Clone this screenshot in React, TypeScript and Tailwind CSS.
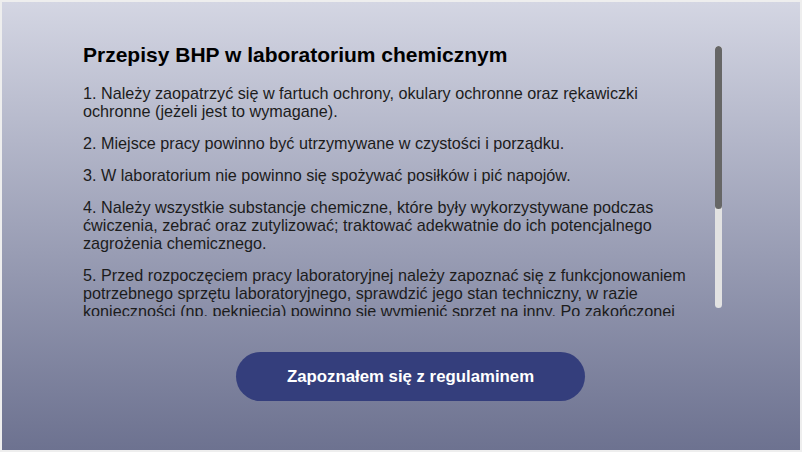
const rules = [
  '1. Należy zaopatrzyć się w fartuch ochrony, okulary ochronne oraz rękawiczki ochronne (jeżeli jest to wymagane).',
  '2. Miejsce pracy powinno być utrzymywane w czystości i porządku.',
  '3. W laboratorium nie powinno się spożywać posiłków i pić napojów.',
  '4. Należy wszystkie substancje chemiczne, które były wykorzystywane podczas ćwiczenia, zebrać oraz zutylizować; traktować adekwatnie do ich potencjalnego zagrożenia chemicznego.',
  '5. Przed rozpoczęciem pracy laboratoryjnej należy zapoznać się z funkcjonowaniem potrzebnego sprzętu laboratoryjnego, sprawdzić jego stan techniczny, w razie konieczności (np. pęknięcia) powinno się wymienić sprzęt na inny. Po zakończonej pracy sprzęt należy umyć, osuszyć i odłożyć na wyznaczone miejsce.',
  '6. Wszelkie uszkodzenia sprzętu, skaleczenia oraz oparzenia należy niezwłocznie zgłosić prowadzącemu zajęcia.',
];

export default function App() {
  return (
    <div
      className="h-[452px] w-[802px] border-2 border-[#eeeeee] bg-gradient-to-b from-[#d4d6e3] to-[#6d7290] pt-[41px]"
      style={{ fontFamily: '"Liberation Sans", Arial, sans-serif' }}
    >
      {/* scroll box */}
      <div className="ml-[81px] flex h-[273px] w-[639px] gap-[15px]">
        <div className="h-full w-[617px] overflow-hidden text-[#1c1c1c]">
          <h1 className="mb-[17px] text-[21px] leading-[24px] font-bold text-black">
            Przepisy BHP w laboratorium chemicznym
          </h1>
          {rules.map((rule) => (
            <p key={rule} className="mb-[14px] text-[16.2px] leading-[18px]">
              {rule}
            </p>
          ))}
        </div>
        {/* scrollbar */}
        <div className="mt-[3px] flex h-[262px] w-[7px] flex-col overflow-hidden rounded-full bg-[#e2e2e2]">
          <div className="h-[163px] w-full rounded-full bg-[#666666]" />
        </div>
      </div>
      <button className="mt-[36px] ml-[234px] h-[49px] w-[349px] rounded-full bg-[#343e7c] text-[16.8px] font-bold text-white">
        Zapoznałem się z regulaminem
      </button>
    </div>
  );
}
